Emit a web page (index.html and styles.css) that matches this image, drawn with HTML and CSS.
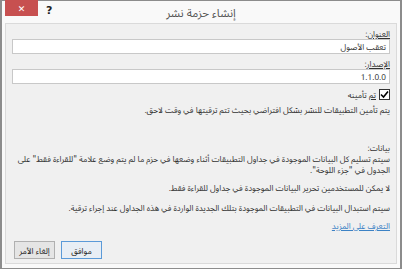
FILE: index.html
```html
<!DOCTYPE html>
<html lang="ar" dir="rtl">
<head>
  <meta charset="UTF-8" />
  <title>إنشاء حزمة نشر</title>
  <link rel="stylesheet" href="styles.css">
</head>
<body>
  <div class="window">
    <div class="titlebar">
      <span class="spacer"></span>
      <span class="title">إنشاء حزمة نشر</span>
      <div class="controls">
        <span class="help">?</span>
        <span class="close">✕</span>
      </div>
    </div>

    <div class="panel">
      <label class="field-label"><u>العنوان</u>:</label>
      <div class="textbox">تعقب الأصول</div>

      <label class="field-label"><u>الإصدار</u>:</label>
      <div class="textbox">1.1.0.0</div>

      <div class="check-row">
        <span class="checkbox">
          <svg width="9" height="9" viewBox="0 0 9 9"><path d="M1 4.5 L3.5 7 L8 1.5" fill="none" stroke="#000" stroke-width="1.6"/></svg>
        </span>
        <span class="check-label"><u>تم</u> تأمينه</span>
      </div>
      <p class="note">يتم تأمين التطبيقات للنشر بشكل افتراضي بحيث تتم ترقيتها في وقت لاحق.</p>

      <div class="data-info">
        <p class="line heading">بيانات:</p>
        <p>سيتم تسليم كل البيانات الموجودة في جداول التطبيقات أثناء وضعها في حزم ما لم يتم وضع علامة "للقراءة فقط" على الجدول في "جزء اللوحة".</p>
        <p class="line gap-small">لا يمكن للمستخدمين تحرير البيانات الموجودة في جداول للقراءة فقط.</p>
        <p class="line gap">سيتم استبدال البيانات في التطبيقات الموجودة بتلك الجديدة الواردة في هذه الجداول عند إجراء ترقية.</p>
        <p class="line gap-small"><a class="more" href="#">التعرف على المزيد</a></p>
      </div>

      <div class="buttons">
        <button class="btn primary">موافق</button>
        <button class="btn">إلغاء الأمر</button>
      </div>
    </div>
  </div>
</body>
</html>
```

FILE: styles.css
```css
html, body {
  margin: 0;
  background: #fff;
}
body {
  font-family: "Noto Sans Arabic UI", "DejaVu Sans", sans-serif;
  font-size: 8.2px;
  color: #333;
}
.window {
  width: 402px;
  height: 269px;
  box-sizing: border-box;
  border: 1px solid #8c8c8c;
  border-left-width: 2px;
  border-right-width: 2px;
  background: #f9f9f9;
  padding: 0 3px 4px 3px;
  display: flex;
  flex-direction: column;
}
.titlebar {
  height: 22px;
  flex: none;
  display: grid;
  grid-template-columns: 1fr auto 1fr;
  align-items: start;
}
.title {
  font-size: 11.5px;
  color: #555;
  padding-top: 4px;
}
.controls {
  display: flex;
  justify-content: flex-end;
  align-items: start;
  gap: 8px;
}
.close {
  width: 33px;
  height: 16px;
  background: #c75050;
  color: #fff;
  font-size: 9px;
  display: flex;
  align-items: center;
  justify-content: center;
  margin-top: -1px;
}
.help {
  font-family: "DejaVu Sans", sans-serif;
  font-weight: bold;
  font-size: 11px;
  color: #222;
  padding-top: 3px;
}
.panel {
  flex: 1;
  background: #f0f0f0;
  border: 1px solid #dadada;
  padding: 5px 6px 0 6px;
  display: flex;
  flex-direction: column;
}
.field-label {
  display: block;
  height: 10px;
  line-height: 10px;
}
.textbox {
  height: 13px;
  line-height: 14px;
  border: 1px solid #c8c8c8;
  background: #fff;
  padding: 0 3px;
  margin-bottom: 5px;
}
.check-row {
  height: 11px;
  display: flex;
  align-items: center;
  gap: 3px;
}
.check-label {
  height: 11px;
  line-height: 11px;
}
.checkbox {
  width: 9px;
  height: 9px;
  border: 1px solid #333;
  background: #fff;
  display: flex;
}
.note {
  height: 11px;
  margin: 4px 0 0 0;
  line-height: 11px;
}
.data-info {
  margin-top: 27px;
  line-height: 11px;
}
.data-info p {
  margin: 0;
}
.data-info .line {
  height: 11px;
}
.data-info .gap-small {
  margin-top: 7px;
}
.data-info .gap {
  margin-top: 9px;
}
.more {
  color: #3c82c5;
}
.buttons {
  margin-top: auto;
  margin-bottom: 4px;
  margin-left: 2px;
  display: flex;
  justify-content: flex-end;
  gap: 6px;
}
.btn {
  font-family: inherit;
  font-size: 8.2px;
  width: 41px;
  height: 18px;
  padding: 0;
  border: 1px solid #b0b0b0;
  background: #e5e5e5;
  color: #222;
}
.btn.primary {
  border-color: #5b9ad8;
  background: #e8eef5;
}
```
